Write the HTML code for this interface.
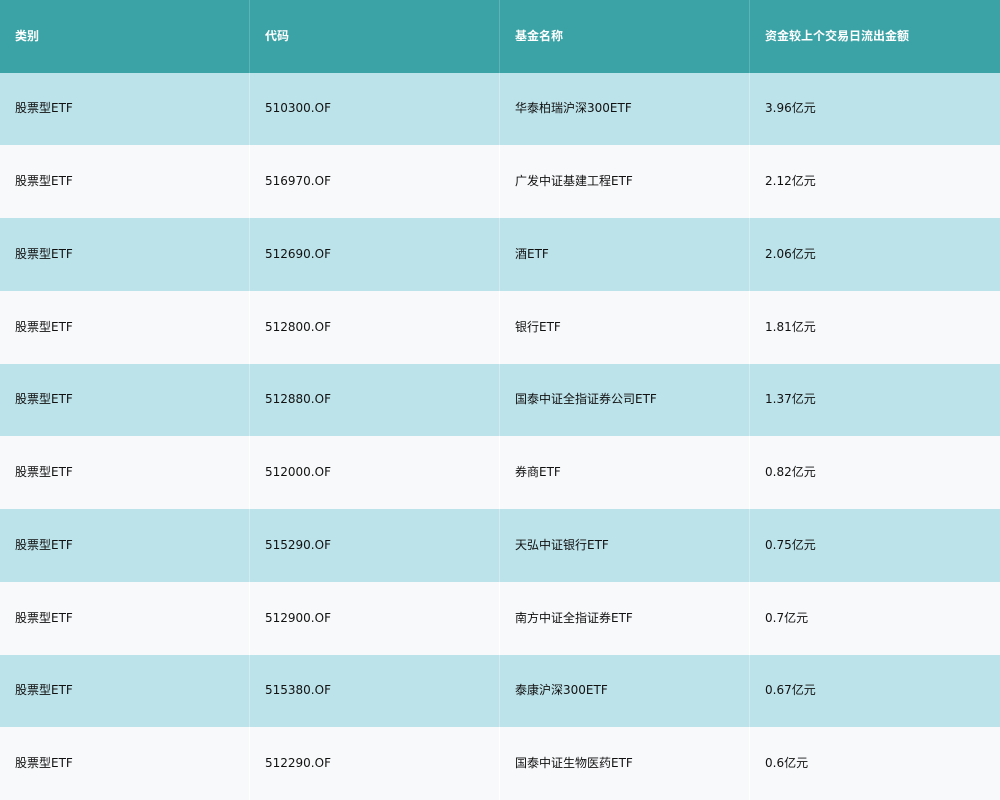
<!DOCTYPE html>
<html><head><meta charset="utf-8"><style>
html,body{margin:0;padding:0;width:1000px;height:800px;overflow:hidden;background:#f8f9fb;font-family:"DejaVu Sans","Noto Sans CJK SC",sans-serif;font-size:12px;color:#111}
.r{position:absolute;left:0;width:1000px;}
.h{background:#3ba3a6;color:#fff;font-weight:bold}
.a{background:#bde3ea}
.b{background:#f8f9fb}
.c{position:absolute;top:0;bottom:0;width:235px;padding-left:15px;display:flex;align-items:center;line-height:14px;padding-bottom:2px;box-sizing:border-box;width:250px}
.c+.c{border-left:1px solid rgba(255,255,255,0.18)}
.a .c+.c{border-left:1px solid rgba(255,255,255,0.3)}
.b .c+.c{border-left:1px solid #fff}
.c1{left:0}.c2{left:249px}.c3{left:499px}.c4{left:749px}
</style></head><body>
<div class="r h" style="top:0;height:73px"><div class="c c1">类别</div><div class="c c2">代码</div><div class="c c3">基金名称</div><div class="c c4">资金较上个交易日流出金额</div></div>
<div class="r a" style="top:73px;height:72px"><div class="c c1">股票型ETF</div><div class="c c2">510300.OF</div><div class="c c3">华泰柏瑞沪深300ETF</div><div class="c c4">3.96亿元</div></div>
<div class="r b" style="top:145px;height:73px"><div class="c c1">股票型ETF</div><div class="c c2">516970.OF</div><div class="c c3">广发中证基建工程ETF</div><div class="c c4">2.12亿元</div></div>
<div class="r a" style="top:218px;height:73px"><div class="c c1">股票型ETF</div><div class="c c2">512690.OF</div><div class="c c3">酒ETF</div><div class="c c4">2.06亿元</div></div>
<div class="r b" style="top:291px;height:73px"><div class="c c1">股票型ETF</div><div class="c c2">512800.OF</div><div class="c c3">银行ETF</div><div class="c c4">1.81亿元</div></div>
<div class="r a" style="top:364px;height:72px"><div class="c c1">股票型ETF</div><div class="c c2">512880.OF</div><div class="c c3">国泰中证全指证券公司ETF</div><div class="c c4">1.37亿元</div></div>
<div class="r b" style="top:436px;height:73px"><div class="c c1">股票型ETF</div><div class="c c2">512000.OF</div><div class="c c3">券商ETF</div><div class="c c4">0.82亿元</div></div>
<div class="r a" style="top:509px;height:73px"><div class="c c1">股票型ETF</div><div class="c c2">515290.OF</div><div class="c c3">天弘中证银行ETF</div><div class="c c4">0.75亿元</div></div>
<div class="r b" style="top:582px;height:73px"><div class="c c1">股票型ETF</div><div class="c c2">512900.OF</div><div class="c c3">南方中证全指证券ETF</div><div class="c c4">0.7亿元</div></div>
<div class="r a" style="top:655px;height:72px"><div class="c c1">股票型ETF</div><div class="c c2">515380.OF</div><div class="c c3">泰康沪深300ETF</div><div class="c c4">0.67亿元</div></div>
<div class="r b" style="top:727px;height:73px"><div class="c c1">股票型ETF</div><div class="c c2">512290.OF</div><div class="c c3">国泰中证生物医药ETF</div><div class="c c4">0.6亿元</div></div>
</body></html>
